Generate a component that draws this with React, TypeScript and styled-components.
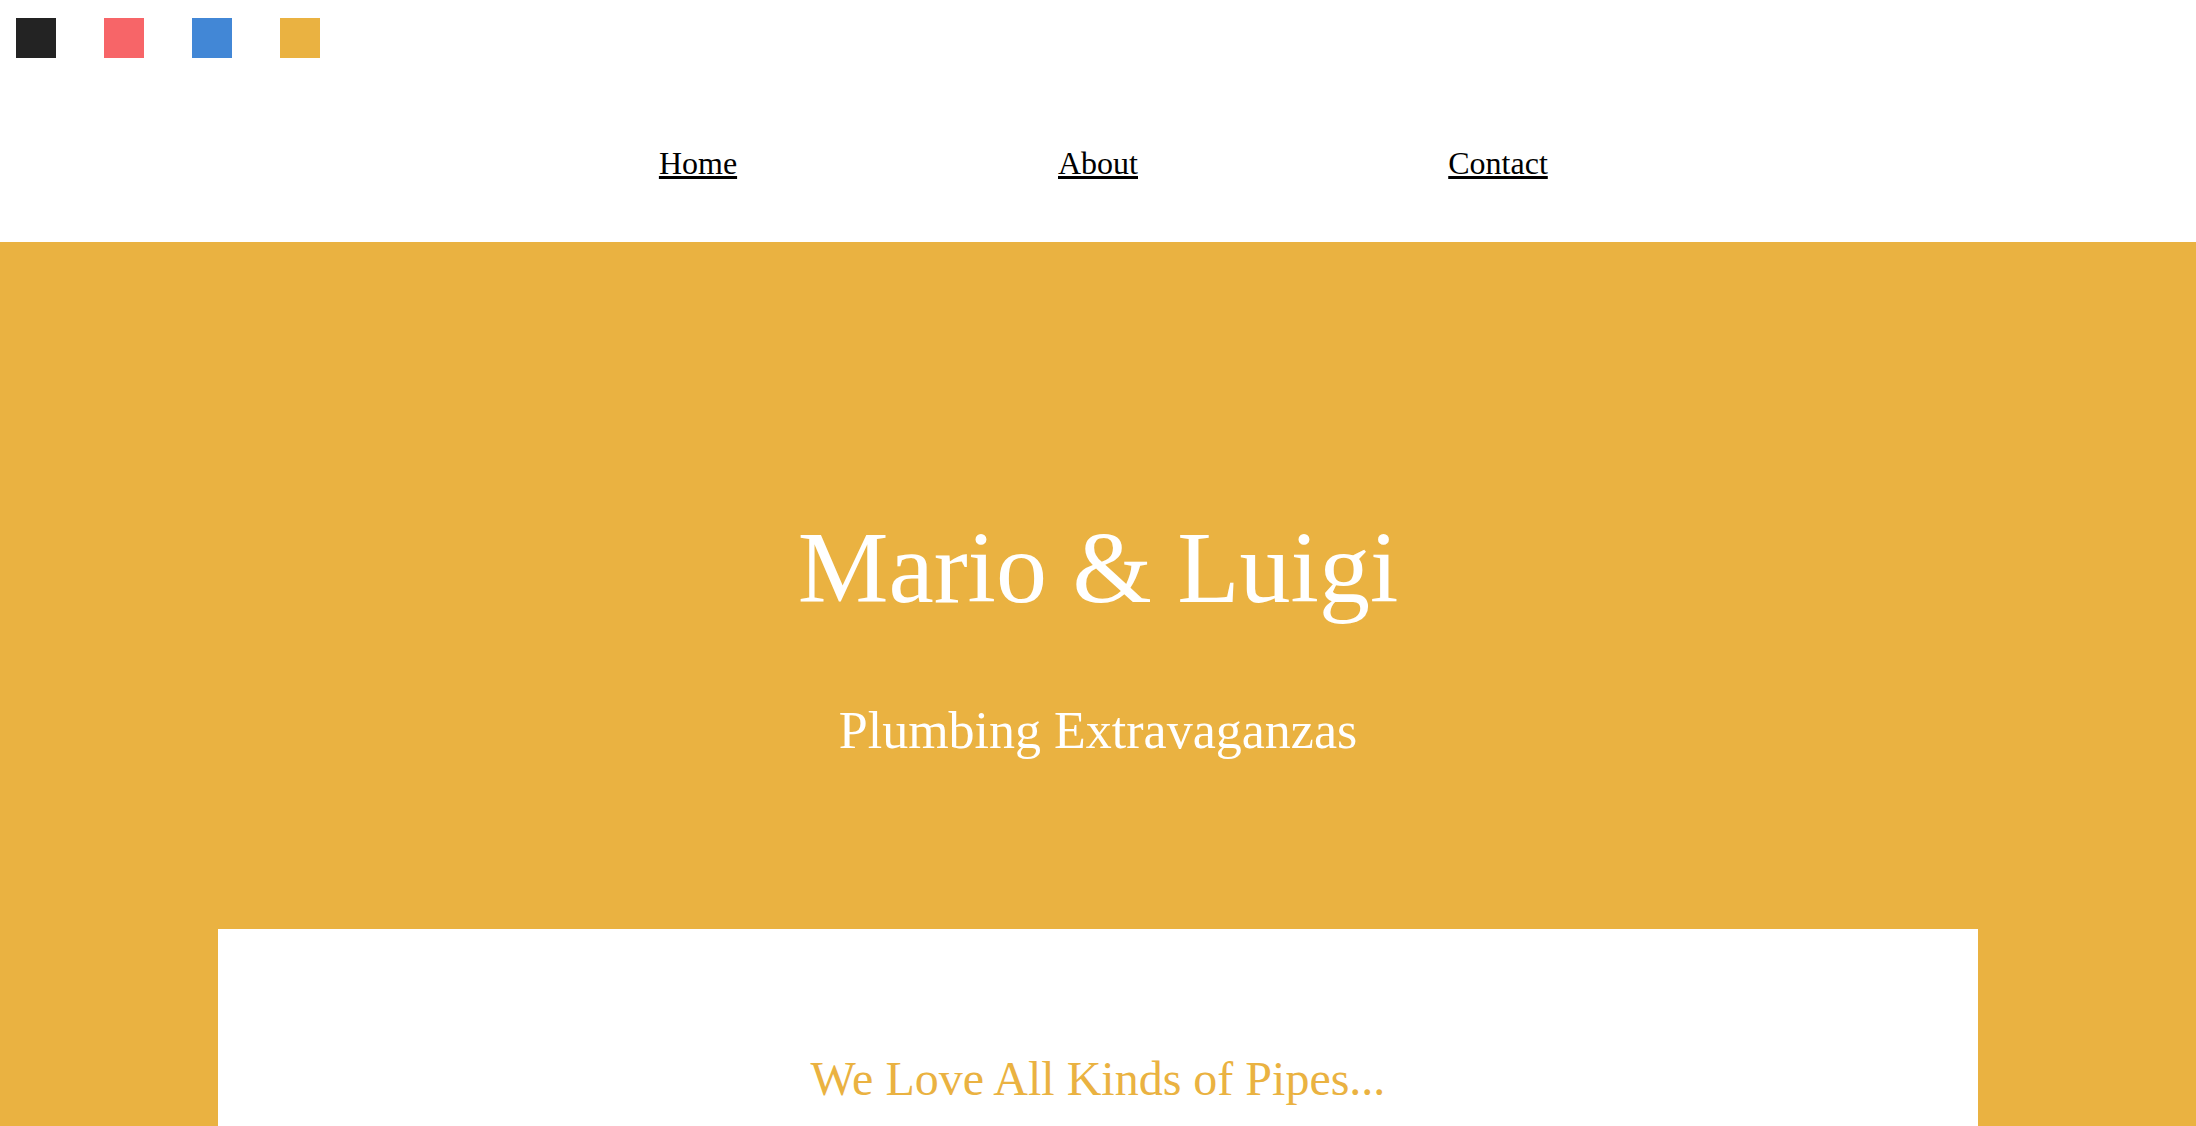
import React from 'react'
import styled, { createGlobalStyle } from 'styled-components'

const palette = ['#232323', '#f76568', '#4287d6', '#eab241']

const links = ['Home', 'About', 'Contact']

const App = () => {
  return (
    <>
      <GlobalStyle />
      <Header>
        <Swatches>
          {palette.map(color => (
            <Swatch key={color} color={color} />
          ))}
        </Swatches>
        <Nav>
          {links.map(link => (
            <NavLink key={link} href='#'>
              {link}
            </NavLink>
          ))}
        </Nav>
      </Header>
      <Hero>
        <Title>Mario &amp; Luigi</Title>
        <Subtitle>Plumbing Extravaganzas</Subtitle>
        <Card>
          <CardHeading>We Love All Kinds of Pipes...</CardHeading>
        </Card>
      </Hero>
    </>
  )
}

const GlobalStyle = createGlobalStyle`
  html, body {
    margin: 0;
    padding: 0;
    background: #fff;
    font-family: 'Liberation Serif', 'Times New Roman', serif;
  }
`

const Header = styled.header`
  padding: 18px 16px 63px;
`

const Swatches = styled.div`
  display: flex;
  gap: 48px;
`

const Swatch = styled.div`
  width: 40px;
  height: 40px;
  background-color: ${props => props.color};
`

const Nav = styled.nav`
  margin-top: 89px;
  display: grid;
  grid-template-columns: repeat(3, 400px);
  justify-content: center;
  margin-left: -16px;
  margin-right: -16px;
`

const NavLink = styled.a`
  justify-self: center;
  font-size: 32px;
  line-height: 32px;
  color: #000;
  text-decoration: underline;
`

const Hero = styled.section`
  background-color: #eab241;
  padding-top: 275px;
  min-height: 884px;
  text-align: center;
  color: #fff;
`

const Title = styled.h1`
  margin: 0;
  font-size: 102px;
  line-height: 102px;
  font-weight: normal;
`

const Subtitle = styled.h2`
  margin: 86px 0 0;
  font-size: 52px;
  line-height: 52px;
  font-weight: normal;
`

const Card = styled.div`
  width: 1760px;
  margin: 172px auto 0;
  background: #fff;
  padding-top: 126px;
  min-height: 400px;
  box-sizing: border-box;
`

const CardHeading = styled.h3`
  margin: 0;
  font-size: 48px;
  line-height: 48px;
  font-weight: normal;
  color: #eab241;
`

export default App
